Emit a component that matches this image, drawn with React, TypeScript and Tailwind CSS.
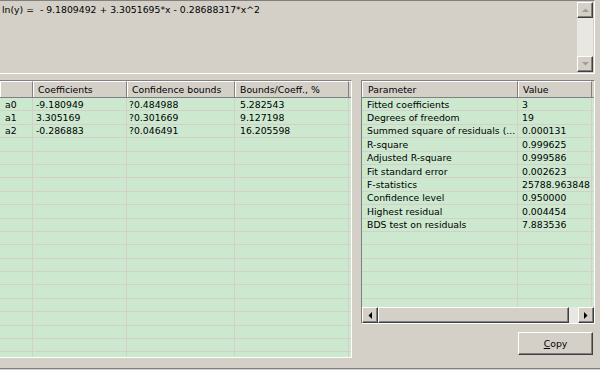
import React from "react";

const leftRows: string[][] = [
  ["a0", "-9.180949", "?0.484988", "5.282543"],
  ["a1", "3.305169", "?0.301669", "9.127198"],
  ["a2", "-0.286883", "?0.046491", "16.205598"],
];

const rightRows: string[][] = [
  ["Fitted coefficients", "3"],
  ["Degrees of freedom", "19"],
  ["Summed square of residuals (...", "0.000131"],
  ["R-square", "0.999625"],
  ["Adjusted R-square", "0.999586"],
  ["Fit standard error", "0.002623"],
  ["F-statistics", "25788.963848"],
  ["Confidence level", "0.950000"],
  ["Highest residual", "0.004454"],
  ["BDS test on residuals", "7.883536"],
];

function Arrow({ dir, color }: { dir: "up" | "down" | "left" | "right"; color: string }) {
  const pts: Record<string, string> = {
    up: "0,4 7,4 3.5,0.5",
    down: "0,0 7,0 3.5,3.5",
    left: "4,0 4,7 0.5,3.5",
    right: "0,0 0,7 3.5,3.5",
  };
  const vert = dir === "up" || dir === "down";
  return (
    <svg width={vert ? 7 : 4} height={vert ? 4 : 7} viewBox={vert ? "0 0 7 4" : "0 0 4 7"}>
      <polygon points={pts[dir]} fill={color} />
    </svg>
  );
}

function SBtn({ dir, color, cls }: { dir: "up" | "down" | "left" | "right"; color: string; cls: string }) {
  return (
    <div
      className={`${cls} bg-[#d4d0c8] border border-t-white border-l-white border-r-[#404040] border-b-[#404040] shadow-[inset_-1px_-1px_0_#808080] flex items-center justify-center shrink-0`}
    >
      <Arrow dir={dir} color={color} />
    </div>
  );
}

export default function App() {
  return (
    <div className="w-[600px] h-[370px] bg-[#d4d0c8] flex flex-col overflow-hidden font-['DejaVu_Sans',sans-serif] text-[9.3px] text-black leading-none">
      {/* Memo */}
      <div className="h-[74px] w-[595px] border-t border-t-[#808080] border-b border-b-white border-r border-r-white flex shrink-0">
        <div className="flex-1 pl-[2px] pt-[4px] whitespace-pre">ln(y) =  - 9.1809492 + 3.3051695*x - 0.28688317*x^2</div>
        <div className="w-[16px] my-[1px] mr-[1px] flex flex-col">
          <SBtn dir="up" color="#a09c94" cls="w-[16px] h-[16px]" />
          <div className="flex-1 bg-[#e9e7e2]" />
          <SBtn dir="down" color="#a09c94" cls="w-[16px] h-[16px]" />
        </div>
      </div>

      {/* Middle */}
      <div className="flex flex-1 pt-[6px]">
        {/* Left grid */}
        <div className="w-[352px] h-[278px] border-t border-t-[#808080] border-r border-r-white border-b border-b-white flex flex-col overflow-hidden shrink-0">
          <div className="flex h-[17px] shrink-0 border-b border-b-[#808080] bg-[#d4d0c8]">
            {[
              ["", "w-[33px]"],
              ["Coefficients", "w-[94px]"],
              ["Confidence bounds", "w-[108px]"],
              ["Bounds/Coeff., %", "w-[114px]"],
            ].map(([t, w], i) => (
              <div
                key={i}
                className={`${w} shrink-0 h-full border-t border-t-white border-l border-l-white border-r border-r-[#808080] pl-[4px] flex items-center whitespace-nowrap overflow-hidden`}
              >
                {t}
              </div>
            ))}
            <div className="flex-1 border-t border-t-white" />
          </div>
          <div className="flex-1 bg-[#cce8cf] overflow-hidden">
            {Array.from({ length: 20 }).map((_, r) => {
              const d = leftRows[r] || ["", "", "", ""];
              return (
                <div key={r} className="flex h-[13.4px] border-b border-b-[#d4d0c8]">
                  <div className="w-[33px] shrink-0 border-r border-r-[#d4d0c8] pl-[5px] flex items-center">{d[0]}</div>
                  <div className="w-[94px] shrink-0 border-r border-r-[#d4d0c8] pl-[3px] flex items-center">{d[1]}</div>
                  <div className="w-[108px] shrink-0 border-r border-r-[#d4d0c8] pl-[2px] flex items-center">{d[2]}</div>
                  <div className="w-[114px] shrink-0 border-r border-r-[#d4d0c8] pl-[5px] flex items-center">{d[3]}</div>
                  <div className="flex-1" />
                </div>
              );
            })}
          </div>
        </div>

        {/* Right panel */}
        <div className="ml-[9px] w-[234px] flex flex-col">
          <div className="h-[244px] border-t border-l border-t-[#808080] border-l-[#808080] border-b border-r border-b-white border-r-white flex flex-col overflow-hidden">
            <div className="flex h-[17px] shrink-0 border-b border-b-[#808080]">
              <div className="w-[156px] shrink-0 h-full border-t border-t-white border-l border-l-white border-r border-r-[#808080] pl-[5px] flex items-center">Parameter</div>
              <div className="w-[74px] shrink-0 h-full border-t border-t-white border-l border-l-white border-r border-r-[#808080] pl-[4px] flex items-center">Value</div>
              <div className="flex-1" />
            </div>
            <div className="flex-1 bg-[#cce8cf] overflow-hidden">
              {Array.from({ length: 16 }).map((_, r) => {
                const d = rightRows[r] || ["", ""];
                return (
                  <div key={r} className="flex h-[13.4px] border-b border-b-[#d4d0c8]">
                    <div className="w-[156px] shrink-0 border-r border-r-[#d4d0c8] pl-[5px] flex items-center whitespace-nowrap overflow-hidden">{d[0]}</div>
                    <div className="w-[74px] shrink-0 border-r border-r-[#d4d0c8] pl-[4px] flex items-center whitespace-nowrap overflow-hidden">{d[1]}</div>
                    <div className="flex-1" />
                  </div>
                );
              })}
            </div>
            <div className="h-[16px] shrink-0 flex bg-[#e9e7e2]">
              <SBtn dir="left" color="#000" cls="w-[16px] h-[16px]" />
              <div className="w-[191px] h-[16px] bg-[#d4d0c8] border border-t-white border-l-white border-r-[#404040] border-b-[#404040] shadow-[inset_-1px_-1px_0_#808080]" />
              <div className="flex-1" />
              <SBtn dir="right" color="#000" cls="w-[16px] h-[16px]" />
            </div>
          </div>
          <div className="flex justify-end mt-[8px] pr-[2px]">
            <div className="w-[75px] h-[23px] bg-[#d4d0c8] border border-t-white border-l-white border-r-[#404040] border-b-[#404040] shadow-[inset_-1px_-1px_0_#808080] flex items-center justify-center">
              <span>
                <span className="underline">C</span>opy
              </span>
            </div>
          </div>
        </div>
      </div>
      <div className="h-px bg-[#808080] shrink-0" />
      <div className="h-px shrink-0" />
    </div>
  );
}
